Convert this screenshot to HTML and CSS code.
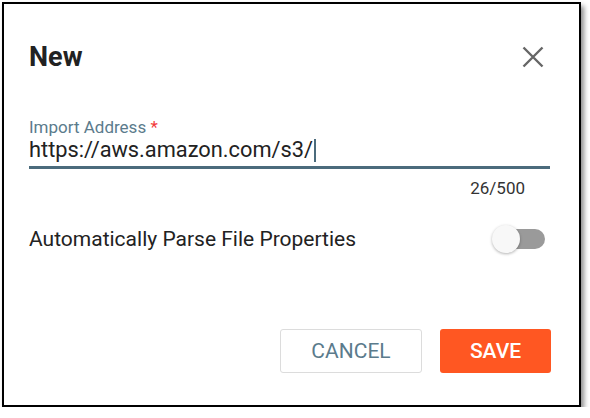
FILE: index.html
```html
<!DOCTYPE html>
<html>
<head>
<meta charset="utf-8">
<link rel="stylesheet" href="styles.css">
</head>
<body>
<div class="dialog">
  <div class="header">
    <h1 class="title">New</h1>
    <button class="close" aria-label="Close">
      <svg width="22" height="22" viewBox="0 0 22 22"><path d="M1.5 1.5 L20.5 20.5 M20.5 1.5 L1.5 20.5" stroke="#666" stroke-width="2.4" fill="none"/></svg>
    </button>
  </div>
  <div class="field">
    <label class="label">Import Address <span class="req">*</span></label>
    <div class="input"><span class="value">https://aws.amazon.com/s3/</span><span class="caret"></span></div>
    <div class="counter">26/500</div>
  </div>
  <div class="toggle-row">
    <span class="toggle-label">Automatically Parse File Properties</span>
    <span class="switch"><span class="track"></span><span class="thumb"></span></span>
  </div>
  <div class="actions">
    <button class="btn btn-cancel">CANCEL</button>
    <button class="btn btn-save">SAVE</button>
  </div>
</div>
</body>
</html>
```

FILE: styles.css
```css
html, body {
  margin: 0;
  padding: 0;
  background: #fff;
}
body {
  font-family: Roboto, "Noto Sans", Arial, sans-serif;
  color: #222;
}
.dialog {
  margin: 2px 0 0 2px;
  box-sizing: border-box;
  width: 579px;
  height: 405px;
  border: 2px solid #000;
  box-shadow: 3px 4px 5px rgba(0,0,0,0.45);
  background: #fff;
  display: flex;
  flex-direction: column;
  padding: 0 29px 0 25px;
}
.header {
  display: flex;
  justify-content: space-between;
  align-items: center;
  margin-top: 35px;
  height: 36px;
}
.title {
  margin: 0;
  font-size: 27px;
  font-weight: 700;
  line-height: 36px;
  color: #222;
}
.close {
  border: 0;
  background: none;
  padding: 0;
  width: 22px;
  height: 22px;
  margin-right: 6px;
  display: block;
}
.close svg { display: block; }
.field {
  margin-top: 42px;
  display: flex;
  flex-direction: column;
}
.label {
  font-size: 17px;
  line-height: 20px;
  color: #5b7b8c;
}
.req { color: #f23a3a; }
.input {
  height: 29px;
  border-bottom: 3px solid #4b6b7c;
  display: flex;
  align-items: flex-start;
}
.value {
  font-size: 21.8px;
  line-height: 26px;
  color: #222;
}
.caret {
  width: 2px;
  height: 23px;
  margin-top: 2px;
  background: #4b6b7c;
  margin-left: 1px;
}
.counter {
  align-self: flex-end;
  margin-top: 9px;
  margin-right: 25px;
  font-size: 17px;
  line-height: 20px;
  color: #333;
}
.toggle-row {
  margin-top: 27px;
  display: flex;
  justify-content: space-between;
  align-items: center;
  height: 28px;
}
.toggle-label {
  font-size: 21px;
  line-height: 28px;
  color: #222;
}
.switch {
  position: relative;
  width: 53px;
  height: 28px;
  margin-right: 5px;
  display: block;
}
.track {
  position: absolute;
  right: 0;
  top: 4px;
  width: 46px;
  height: 20px;
  border-radius: 10px;
  background: #9a9a9a;
}
.thumb {
  position: absolute;
  left: 0;
  top: 0;
  width: 28px;
  height: 28px;
  border-radius: 50%;
  background: #f8f8f8;
  box-shadow: 0 1px 3px rgba(0,0,0,0.3);
}
.actions {
  margin-top: auto;
  margin-bottom: 32px;
  margin-right: -1px;
  display: flex;
  justify-content: flex-end;
  gap: 18px;
}
.btn {
  font-family: Roboto, "Noto Sans", Arial, sans-serif;
  font-size: 21px;
  height: 44px;
  border-radius: 3px;
  cursor: pointer;
  padding: 0;
}
.btn-cancel {
  width: 142px;
  background: #fff;
  border: 1px solid #dcdcdc;
  color: #5b7b8c;
}
.btn-save {
  width: 111px;
  background: #ff5722;
  border: 0;
  color: #fff;
  font-weight: 500;
}
```
